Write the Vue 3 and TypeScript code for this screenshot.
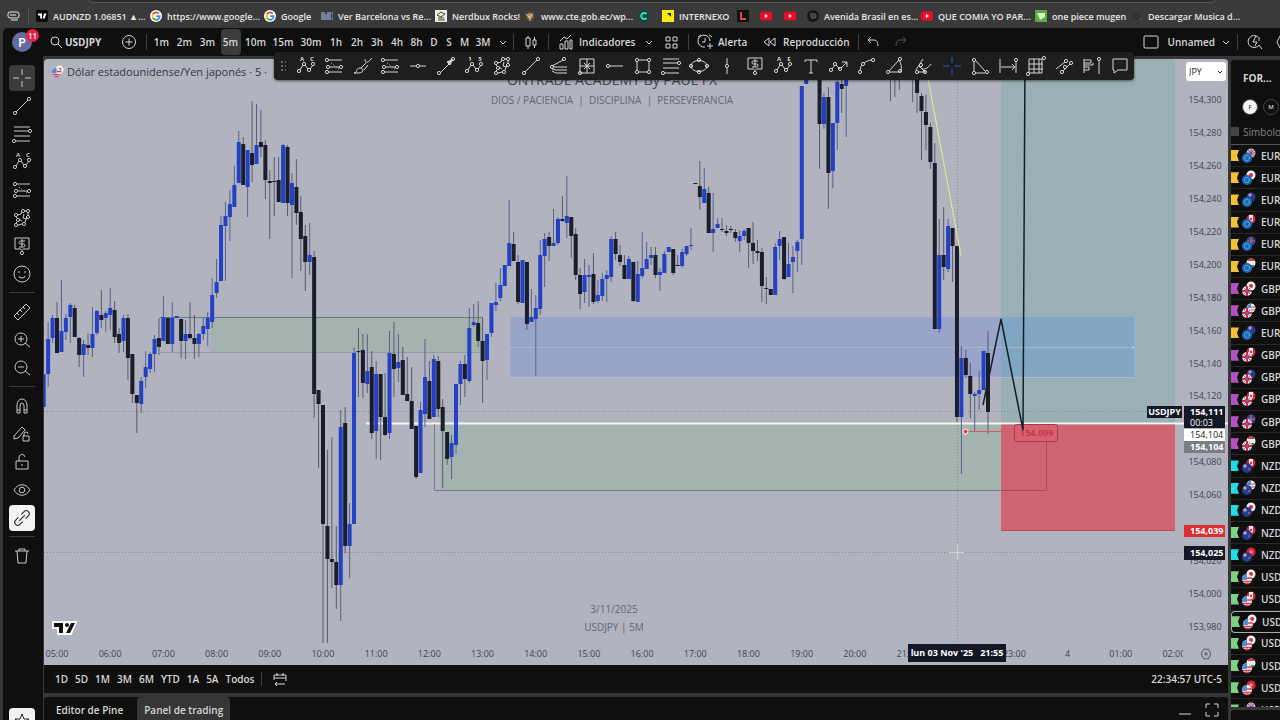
<script setup lang="ts">
interface Bookmark { icon: string; label: string }
interface Candle { x: number; high: number; top: number; bottom: number; low: number; kind: string }

const bookmarks: Bookmark[] = [
  { icon: 'tv', label: 'AUDNZD 1.06851 ▲...' },
  { icon: 'google', label: 'https://www.google...' },
  { icon: 'google', label: 'Google' },
  { icon: 'bars', label: 'Ver Barcelona vs Re...' },
  { icon: 'nerd', label: 'Nerdbux Rocks!' },
  { icon: 'crest', label: 'www.cte.gob.ec/wp...' },
  { icon: 'cee', label: '' },
  { icon: 'yellow', label: 'INTERNEXO' },
  { icon: 'ell', label: '' },
  { icon: 'tube', label: '' },
  { icon: 'tube', label: '' },
  { icon: 'disc', label: 'Avenida Brasil en es...' },
  { icon: 'tube', label: 'QUE COMIA YO PAR...' },
  { icon: 'green', label: 'one piece mugen' },
  { icon: 'dim', label: 'Descargar Musica d...' },
]

const favicons: Record<string, string> = {
  tv: '<rect width="12" height="12" rx="2" fill="#0a0a0a"/><path d="M2 3.500h4v5H4.200v-3H2zM8.200 3.500h2.300L8.600 8.500H6.600z" fill="#fff"/>',
  google: '<circle cx="6" cy="6" r="6" fill="#fff"/><g fill="none" stroke-width="1.800"><path d="M8.800 3.600A3.600 3.600 0 0 0 2.900 4.300" stroke="#ea4335"/><path d="M2.900 4.300a3.600 3.600 0 0 0 0 3.500" stroke="#fbbc05"/><path d="M2.900 7.800a3.600 3.600 0 0 0 5.600 1" stroke="#34a853"/><path d="M8.500 8.800A3.600 3.600 0 0 0 9.600 6.200H6.200" stroke="#4285f4"/></g>',
  bars: '<path d="M1 2v8M3 2v8M5 4v6M7 2v8M9 2v8" stroke="#a9c4ee" stroke-width="1"/><path d="M4 6h4M9 3h3v6H9" stroke="#5e8ed2" fill="none"/>',
  nerd: '<rect width="12" height="12" fill="#efefdf"/><path d="M2 5l4-3 4 2-4 3zM3 8h6M3 10h7" stroke="#40452f" fill="none"/>',
  crest: '<circle cx="6" cy="6" r="5.500" fill="#4b443d"/><circle cx="6" cy="6" r="3" fill="#b98b52"/><path d="M2 4l3 3 4-3M6 7v4" stroke="#ccc" fill="none"/>',
  cee: '<circle cx="6" cy="6" r="6" fill="#14463b"/><path d="M8.500 4A3 3 0 1 0 8.500 8" fill="none" stroke="#35ddb3" stroke-width="2"/>',
  yellow: '<rect width="12" height="12" fill="#f7ec13"/><path d="M5 3h4v4L7.500 5.500z" fill="#25250a"/>',
  ell: '<rect width="12" height="12" fill="#111"/><path d="M4 2v7h5" stroke="#d24a4f" stroke-width="2" fill="none"/>',
  tube: '<rect y="1.500" width="12" height="9" rx="2.500" fill="#f00b24"/><path d="M4.800 4v4L8.200 6z" fill="#fff"/>',
  disc: '<circle cx="6" cy="6" r="6" fill="#171717"/><path d="M3 4h4a2 2 0 0 1 0 4H4M3 6h4" stroke="#777" fill="none"/>',
  green: '<rect width="12" height="12" fill="#5da945"/><path d="M2 3h8v4L5 10z" fill="#ddf2cb"/>',
  dim: '<circle cx="5" cy="6" r="4" fill="#2d3335"/><circle cx="10" cy="9" r="1" fill="#555"/>',
}

const intervals = ['1m', '2m', '3m', '5m', '10m', '15m', '30m', '1h', '2h', '3h', '4h', '8h', 'D', 'S', 'M', '3M']

const dot = (x: number, y: number) => `<circle cx="${x}" cy="${y}" r="1.600"/>`
const tag = (x: number, y: number, s: string) => `<text x="${x}" y="${y}">${s}</text>`
const wave = '<path d="M-6 4L-3-1M-1-1L2 3M4 3L7-1"/>' + dot(-7, 5) + dot(-2, -2) + dot(3, 4) + dot(7, -2)

const glyphs: Record<string, string> = {
  cross: '<path d="M0-9v6M0 3v6M-9 0h6M3 0h6"/>',
  abcd: wave + tag(-4, -5, 'A') + tag(6, -5, 'C'),
  wave15: wave + tag(-4, -5, '1') + tag(6, -5, '5'),
  waveAE: wave + tag(-4, -5, 'A') + tag(6, -5, 'E'),
  channel: '<path d="M-5-6H8M-4 1H5M-5 6H8"/><path d="M-3-3L6 4" stroke-dasharray="1 2"/>' + dot(-7, -6) + dot(7, 1) + dot(-7, 6) + dot(-6, 1),
  brush: '<path d="M-8 7c4 0 1-5 6-5 4 0 4 5-1 5zM-1 2L4-3M2 4L6-1"/><path d="M3-7c0 5 3 4 7-1"/>',
  hline: '<path d="M-8 0h6M2 0h6"/>' + dot(0, 0),
  hray: '<path d="M-5 0H8"/>' + dot(-7, 0),
  arrow: '<path d="M-5 6L5-4"/><path d="M7-7L1-4 4-1z" fill="currentColor"/>' + dot(-7, 7) + dot(7, -7),
  pattern: '<path d="M-4-3L-1-4 0-6M3-7H4M6-5V-3M5-1L3 4M0 6L-4 7M-6 5L-5 4M-5 0L-6-1"/><path d="M2-4L1 0 4 1M-3 1L0 3"/>' + dot(-6, -3) + dot(1, -7) + dot(6, -7) + dot(6, -1) + dot(2, 6) + dot(-6, 7) + dot(-4, 2),
  trend: '<path d="M-6 6L6-6"/>' + dot(-7, 7) + dot(7, -7),
  fan: '<path d="M-7 0L4-6M-5 1H8M-7 3L-3 4H8M-7 5L-3 7H8"/>' + dot(5, -7) + dot(-7, 1),
  cube: '<path d="M-7-7H7V7H-7zM0-7V7M-7 0H7M-3-3L3 3M3-3L-3 3"/>' + dot(-7, 7),
  rect: '<path d="M-4-6H4M6-4V4M4 6H-4M-6 4V-4"/>' + dot(-6, -6) + dot(6, -6) + dot(6, 6) + dot(-6, 6),
  fib: '<path d="M-8-7H8M-8-3H6M-8 2H8M-6 7H8"/>' + dot(8, -3) + dot(-8, 7),
  ellipse: '<ellipse rx="8" ry="5.500"/>' + dot(0, -6) + dot(0, 6) + dot(-8, 0) + dot(8, 0),
  vline: '<path d="M0-8v6M0 2v6"/>' + dot(0, 0),
  dollar: '<path d="M-1 3H-7V-8H7V3H1M0 3v3"/><path d="M3-5H-1.500a1.500 1.500 0 0 0 0 3H1.500a1.500 1.500 0 0 1 0 3H-3M0-7V1"/>' + dot(0, 7),
  text: '<path d="M-6-4V-6H6V-4M0-6V7M-2 7H2"/>',
  zigzag: '<path d="M-7 3L-4-1M-3-1L1 3M2 2L8-4M3-4H8V1"/>' + dot(-8, 4) + dot(-4, -2) + dot(1, 3),
  curve: '<path d="M-7 4C-6 1-6 0-5-1M-3-3C0-5 2-6 5-6"/>' + dot(-7, 6) + dot(-4, -2) + dot(6, -6),
  sector: '<path d="M-6 5L4-6C7-1 7 4 5 6H-6"/>' + dot(-7, 6) + dot(5, -7) + dot(5, 5),
  pitch: '<path d="M-7 4L0-7M-4 0C0 6 5 2 8-2M-5 6H3M-4 0L2 6"/>' + dot(-6, 6) + dot(-2, -1) + dot(2, 6),
  triangle: '<path d="M-6-4V5M-4-5L5 5M-5 7H5"/>' + dot(-6, -6) + dot(-6, 7) + dot(7, 6),
  range: '<path d="M-8-7V7M8-4V7M-7 1H7M4-2L7 1 4 4"/>' + dot(8, -6),
  grid: '<path d="M-7-7H6V7H-7zM-7-2H7M-7 3H7M-2-7V7M3-7V7"/>' + dot(-8, 8) + dot(8, -8),
  parallel: '<path d="M-8 3L1-4M-1 5L6-2"/>' + dot(2, -5) + dot(-2, 6) + dot(7, -3) + dot(1, 1),
  profile: '<path d="M-8-7V7M-8-6H-1V-3H-8M-8-1H1V-3M-8 1H-3V4H-8M7-5V8"/>' + dot(7, -7),
  comment: '<path d="M-7-7H7V4H-2L-6 7V4H-7z"/>',
  smile: '<circle r="8"/><path d="M-3 2a3 2 0 0 0 6 0M-3-3v2M3-3v2"/>',
  ruler: '<path d="M-8 4L4-8 8-4-4 8zM-5 1l2 2M-2-2l2 2M1-5l2 2"/>',
  zoomin: '<circle cx="-1" cy="-1" r="6"/><path d="M3 3l5 4M-4-1h6M-1-4v6"/>',
  zoomout: '<circle cx="-1" cy="-1" r="6"/><path d="M3 3l5 4M-4-1h6"/>',
  magnet: '<path d="M-5 7V-1a5 6 0 0 1 10 0V7H2V0a2 3 0 0 0-4 0V7zM-5 4h3M2 4h3"/>',
  penlock: '<path d="M-8 2L0-7 3-4-4 4-8 5zM1 2H7V7H1zM2 2V0A2 2 0 0 1 6 0"/>',
  lock: '<path d="M-6-1H6V7H-6zM-3-1V-4A3 3 0 0 1 3-5M0 2v2"/>',
  eye: '<path d="M-8 0C-4-7 4-7 8 0 4 7-4 7-8 0z"/><circle r="2.800"/>',
  link: '<path transform="rotate(-45)" d="M-2-3H-6a3 3 0 0 0 0 6H-2M2-3H6a3 3 0 0 1 0 6H2M-4 0H4"/>',
  trash: '<path d="M-7-5H7M-5-5L-4 7H4L5-5M-3-5V-7H3V-5"/>',
  star: '<path d="M0-7L2-2H7L3 1 5 6 0 3-5 6-3 1-7-2H-2z"/>',
  search: '<circle cx="-1" cy="-1" r="4"/><path d="M2 2l4 4"/>',
  plus: '<circle r="6.500"/><path d="M-3.500 0h7M0-3.500v7"/>',
  chevron: '<path d="M-3-1L0 2 3-1"/>',
  candles: '<path d="M-5-4H-1V4H-5zM-3-6v2M-3 4v3M2-2H5V3H2zM3.500-5v3M3.500 3v3"/>',
  chart: '<path d="M-6 7V2H-3V7zM-1 7V-1H2V7zM4 7V-2H6V7zM-6-1L-2-5 1-3 5-7"/>',
  squares: '<path d="M-5-5H-1V-1H-5zM2-5H6V-1H2zM-5 2H-1V6H-5zM2 2H6V6H2z"/>',
  alarm: '<path d="M5-1A6 6 0 1 0 0 5M0-4V0H-3M-7-5L-4-7M4-7L7-5M5 1V7M2 4H8"/>',
  rewind: '<path d="M-1-4V4L-6 0zM5-4V4L0 0z"/>',
  undo: '<path d="M-2-5L-5-2-2 1M-5-2H1C4-2 5 1 5 4"/>',
  redo: '<path d="M2-5L5-2 2 1M5-2H-1C-4-2-5 1-5 4"/>',
  square: '<rect x="-7" y="-6" width="14" height="12" rx="1"/>',
  quick: '<path d="M3-5A6 6 0 1 0 4 3L7 7M1-6L-2 0H2L0 4M4-5v4"/>',
  hexagon: '<path d="M-3-6H3L6 0 3 6H-3L-6 0z"/><circle r="1.500"/>',
  calendar: '<path d="M-6 1V-4H6V2M-6-1H6M-3-6v3M3-6v3M5 5H-5M-3 3L-5 5-3 7"/>',
  minus: '<path d="M-6 4H6"/>',
  maximize: '<path d="M-6-2V-6H-2M2-6H6V-2M6 2V6H2M-2 6H-6V2"/>',
  frame: '<path d="M-5-2a2 2 0 0 1 2-2H4a2 2 0 0 1 2 2V0a2 2 0 0 1-2 2H-3a2 2 0 0 1-2-2zM-3-1H3M-2 4H5"/>',
}

const drawingTools = ['abcd', 'channel', 'brush', 'channel', 'hline', 'arrow', 'wave15', 'pattern', 'trend', 'fan', 'cube', 'hray', 'rect', 'fib', 'ellipse', 'vline', 'dollar', 'waveAE', 'text', 'zigzag', 'curve', 'sector', 'pitch', 'cross', 'triangle', 'range', 'grid', 'parallel', 'profile', 'comment']
const sideGroups = [
  ['cross', 'trend', 'fib', 'abcd', 'channel', 'pattern', 'dollar', 'smile'],
  ['ruler', 'zoomin', 'zoomout'],
  ['magnet', 'penlock', 'lock', 'eye', 'link'],
  ['trash'],
]

/* One entry per five-minute bar from 04:45: kind, wick high, body top, body bottom, wick low. */
const series = `
b 374 374 407 407;b 322 339 374 387;b 315 318 338 343;d 302 318 353 353;b 280 331 352 352;b 314 318 332 340;b 303 305 317 343;d 305 308 337 337;
d 337 338 355 367;b 340 344 355 377;d 333 345 348 355;b 307 334 348 357;b 310 311 333 335;d 290 315 320 328;b 311 313 318 332;b 288 308 315 330;
d 301 310 337 343;d 328 334 343 353;b 315 318 341 352;d 314 318 358 380;d 354 354 394 403;d 395 395 403 433;b 377 381 404 413;b 351 367 377 388;
b 352 354 369 373;b 335 339 354 372;d 318 338 347 355;b 296 317 341 341;d 318 318 344 344;b 302 318 344 352;b 316 316 318 318;d 319 319 341 358;
b 320 334 341 359;d 302 334 338 340;d 315 338 344 359;b 333 334 344 357;b 318 326 334 340;b 312 318 329 346;b 278 295 322 328;b 259 282 293 298;
b 216 225 281 281;b 202 216 226 281;b 190 204 217 241;b 166 185 207 207;b 131 142 183 183;d 137 144 185 185;b 150 150 187 217;d 101 153 165 182;
b 104 145 164 164;d 110 142 147 157;d 140 145 180 199;d 170 181 183 239;d 157 181 182 216;d 157 180 202 202;b 144 145 203 203;d 145 147 203 216;
b 173 183 205 278;d 159 187 213 225;d 196 212 239 271;d 225 236 262 291;b 223 255 262 275;d 251 257 394 418;d 390 390 404 468;d 405 405 524 643;
d 450 526 559 643;d 437 559 562 588;d 526 562 585 609;b 410 427 585 621;d 407 423 546 553;b 503 524 546 578;b 347 353 524 524;d 328 351 352 397;
d 334 350 383 398;b 334 371 384 393;d 351 367 433 439;b 361 374 431 459;d 374 374 417 460;d 373 417 435 436;b 331 353 433 439;d 322 354 369 397;
b 334 362 368 382;d 347 360 395 395;d 357 394 401 401;d 367 401 429 429;d 426 426 477 479;b 402 410 473 473;b 339 377 414 427;d 361 381 419 419;
b 355 359 417 417;d 356 361 409 417;d 399 407 431 488;d 432 432 459 465;b 435 443 457 479;b 384 384 445 454;b 361 364 384 405;d 355 364 379 397;
b 308 328 381 383;b 304 322 325 327;d 301 323 341 347;d 318 341 361 403;b 334 334 360 380;b 303 303 333 337;b 283 302 305 311;b 268 285 298 301;
b 265 265 286 286;b 200 243 266 266;d 232 244 261 261;d 255 262 302 304;b 260 260 303 303;d 262 262 324 330;b 289 317 322 322;b 295 308 319 376;
b 240 255 309 315;b 233 239 256 287;d 232 237 246 261;b 209 243 246 246;b 217 219 243 245;d 196 219 221 222;b 176 216 223 238;d 217 217 236 258;
d 228 234 275 280;d 268 275 294 309;b 259 275 292 303;b 265 275 277 307;d 253 274 302 304;b 280 295 301 303;b 273 279 296 301;b 270 275 279 302;
b 236 239 277 282;d 232 239 254 260;d 245 255 262 266;d 255 265 279 279;b 256 259 279 279;d 262 262 301 302;b 261 274 302 302;b 232 268 276 278;
b 242 259 269 269;b 247 255 258 265;d 247 255 275 278;b 268 272 275 291;b 251 254 273 273;b 247 247 252 252;d 249 249 273 275;d 255 265 266 266;
b 249 252 266 268;b 246 246 254 256;b 228 245 246 250;d 183 183 184 184;d 161 186 197 210;b 168 189 203 203;d 187 193 233 233;b 193 229 233 252;
b 218 224 228 228;d 218 229 230 232;d 225 231 233 236;d 226 229 230 233;d 229 232 238 242;b 230 236 241 252;b 229 231 236 240;d 228 228 243 268;
d 222 243 251 264;d 240 251 253 261;d 248 252 286 302;d 277 288 289 304;d 289 289 295 295;b 243 247 295 295;b 231 239 246 260;d 237 237 279 280;
b 243 264 277 277;b 246 257 262 293;b 240 242 251 272;b 86 86 239 265;b 70 70 84 84;b 60 60 70 70;b 60 60 70 70;d 60 60 124 169;b 93 97 124 129;
d 87 97 173 209;b 123 123 171 188;b 60 82 123 150;d 70 84 89 113;b 60 60 86 137;b 60 60 70 70;b 60 60 70 70;b 60 60 70 70;b 60 60 70 70;b 60 60 70 70;
b 60 60 70 70;b 60 60 70 70;b 60 60 70 70;b 60 60 70 70;d 60 60 70 101;d 60 60 70 97;d 60 60 70 90;d 60 60 70 70;d 60 60 70 70;d 60 60 70 102;
d 60 60 93 113;d 93 96 111 160;d 95 112 125 150;d 123 127 162 169;d 143 163 329 329;b 219 255 329 333;d 207 255 267 280;b 219 226 269 272;
d 228 228 246 282;d 246 246 417 422;b 346 358 417 474;d 350 358 375 378;d 363 376 394 418;b 392 394 396 431;b 371 390 394 410;b 351 351 390 390;d 331 353 412 434`

const candles: Candle[] = series.split(';').map((row, i) => {
  const [kind, high, top, bottom, low] = row.trim().split(' ')
  return { kind, x: 57 + ((i - 3) * 53.2) / 12, high: +high, top: +top, bottom: +bottom, low: +low }
})

/* Levels fully behind a price tag keep their slot on the scale and show no label. */
const covered = [154100, 154040]
const prices = Array.from({ length: 17 }, (_, i) => {
  const v = 154300 - i * 20
  return covered.includes(v) ? '' : `${Math.floor(v / 1000)},${String(v % 1000).padStart(3, '0')}`
})
const times = ['05:00', '06:00', '07:00', '08:00', '09:00', '10:00', '11:00', '12:00', '13:00', '14:00', '15:00', '16:00', '17:00', '18:00', '19:00', '20:00', '21:00', '', '23:00', '4', '01:00', '02:00']
const ranges = ['1D', '5D', '1M', '3M', '6M', 'YTD', '1A', '5A', 'Todos']

const quotes = ['gb', 'jp', 'au', 'ca', 'nz', 'hu', 'jp', 'us', 'au', 'ca', 'au', 'ca', 'nz', 'hu', 'ca', 'us', 'jp', 'ca', 'ch', 'jp', 'ca', 'jp', 'jp', 'hu', 'ch', 'gb']
const bases = ['EUR', 'EUR', 'EUR', 'EUR', 'EUR', 'EUR', 'GBP', 'GBP', 'EUR', 'GBP', 'GBP', 'GBP', 'GBP', 'GBP', 'NZD', 'NZD', 'NZD', 'NZD', 'NZD', 'USD', 'USD', 'USD', 'USD', 'USD', 'USD', 'USD']
const marks: Record<string, string> = { EUR: 'gold', GBP: 'violet', NZD: 'cyan', USD: 'lime' }
const watch = bases.map((base, i) => ({ base, quote: quotes[i], mark: i === 17 ? 'lime' : marks[base], active: i === 21 }))

const flags: Record<string, string> = {
  EUR: '<circle r="5" fill="#1769b8"/><circle r="2.500" fill="none" stroke="#b8d8f5" stroke-dasharray="1 1"/>',
  GBP: '<circle r="5" fill="#eadbe6"/><path d="M-5 0H5M0-5V5" stroke="#d32845" stroke-width="2"/><path d="M-3-3L3 3M3-3L-3 3" stroke="#6471a9"/>',
  NZD: '<circle r="5" fill="#203f8f"/><path d="M-4-2H0M-2-4V0" stroke="#f3b8c5"/><circle cx="2" cy="1" r="1" fill="#e94158"/>',
  USD: '<circle r="5" fill="#f4ecec"/><path d="M-4 2.500H4M0-1H5M-2 4.500H2" stroke="#d93f4e" stroke-width="1.500"/><path d="M-5 1A5 5 0 0 1 0-5V1z" fill="#4b8fd9"/>',
  gb: '<circle r="4.500" fill="#d9bccb"/><path d="M-4 0H4M0-4V4" stroke="#ce3c58"/><path d="M-3-3L3 3M3-3L-3 3" stroke="#51609d"/>',
  jp: '<circle r="4.500" fill="#f5f2f2"/><circle r="2" fill="#d8283b"/>',
  au: '<circle r="4.500" fill="#263b8b"/><path d="M-3-2H1M-1-4V0" stroke="#e8a8bb"/>',
  ca: '<circle r="4.500" fill="#d62a3d"/><path d="M-2-4V4L2 2V-4z" fill="#f4eded"/><circle r="1.200" fill="#d62a3d"/>',
  nz: '<circle r="4.500" fill="#34478c"/><path d="M-4 0H4M0-4V4" stroke="#d46a80"/>',
  us: '<circle r="4.500" fill="#eee"/><path d="M-4 2H4M0-1H4" stroke="#d8414f"/><path d="M-4 0A4 4 0 0 1 0-4V0z" fill="#4788cf"/>',
  hu: '<circle r="4.500" fill="#f0eee8"/><path d="M-3-3H3" stroke="#cf3c43" stroke-width="2"/><path d="M-3 3H3" stroke="#3c8b55" stroke-width="2"/>',
  ch: '<circle r="4.500" fill="#df2436"/><path d="M-2 0H2M0-2V2" stroke="#f2a7ad"/>',
}
</script>

<template>
  <div class="app">
    <nav class="bookmarks" aria-label="Marcadores">
      <span class="curve"></span>
      <button class="plain" aria-label="Pestañas"><svg class="g" viewBox="-11 -11 22 22" v-html="glyphs.frame"></svg></button>
      <a v-for="(b, i) in bookmarks" :key="i" href="#" :aria-label="b.label || b.icon">
        <svg class="fav" viewBox="0 0 12 12" v-html="favicons[b.icon]"></svg><span>{{ b.label }}</span>
      </a>
    </nav>

    <header class="topbar">
      <button class="avatar" aria-label="Perfil">P<span class="badge">11</span></button>
      <button class="symbol"><svg class="g" viewBox="-11 -11 22 22" v-html="glyphs.search"></svg>USDJPY</button>
      <button class="w34" aria-label="Comparar"><svg class="g" viewBox="-11 -11 22 22" v-html="glyphs.plus"></svg></button>
      <i class="sep"></i>
      <div class="intervals">
        <button v-for="t in intervals" :key="t" :class="{ on: t === '5m' }">{{ t }}</button>
      </div>
      <button class="w20" aria-label="Intervalos"><svg class="g" viewBox="-11 -11 22 22" v-html="glyphs.chevron"></svg></button>
      <i class="sep"></i>
      <button class="w34" aria-label="Velas"><svg class="g" viewBox="-11 -11 22 22" v-html="glyphs.candles"></svg></button>
      <i class="sep"></i>
      <button class="labelled ind"><svg class="g" viewBox="-11 -11 22 22" v-html="glyphs.chart"></svg>Indicadores</button>
      <button class="w22" aria-label="Favoritos"><svg class="g" viewBox="-11 -11 22 22" v-html="glyphs.chevron"></svg></button>
      <button class="w22" aria-label="Plantillas"><svg class="g" viewBox="-11 -11 22 22" v-html="glyphs.squares"></svg></button>
      <i class="sep"></i>
      <button class="labelled alert"><svg class="g" viewBox="-11 -11 22 22" v-html="glyphs.alarm"></svg>Alerta</button>
      <button class="labelled replay"><svg class="g" viewBox="-11 -11 22 22" v-html="glyphs.rewind"></svg>Reproducción</button>
      <i class="sep"></i>
      <button class="w28" aria-label="Deshacer"><svg class="g" viewBox="-11 -11 22 22" v-html="glyphs.undo"></svg></button>
      <button class="w28 faded" aria-label="Rehacer"><svg class="g" viewBox="-11 -11 22 22" v-html="glyphs.redo"></svg></button>
      <span class="grow"></span>
      <button class="labelled layout"><svg class="g" viewBox="-11 -11 22 22" v-html="glyphs.square"></svg>Unnamed</button>
      <button class="w22" aria-label="Diseños"><svg class="g" viewBox="-11 -11 22 22" v-html="glyphs.chevron"></svg></button>
      <i class="sep"></i>
      <button class="w34" aria-label="Búsqueda rápida"><svg class="g" viewBox="-11 -11 22 22" v-html="glyphs.quick"></svg></button>
      <button class="cut" aria-label="Ajustes"><svg class="g" viewBox="-11 -11 22 22" v-html="glyphs.hexagon"></svg></button>
    </header>

    <div class="drawbar" role="toolbar" aria-label="Herramientas favoritas">
      <span class="grip"></span>
      <button v-for="(t, i) in drawingTools" :key="i" :class="{ blue: t === 'cross' }" :aria-label="t"><svg class="g" viewBox="-11 -11 22 22" v-html="glyphs[t]"></svg></button>
    </div>

    <div class="body">
      <aside class="side">
        <div v-for="(grp, gi) in sideGroups" :key="gi" class="group">
          <button v-for="t in grp" :key="t" :class="{ sel: t === 'cross', lit: t === 'link' }" :aria-label="t"><svg class="g" viewBox="-11 -11 22 22" v-html="glyphs[t]"></svg></button>
        </div>
        <button class="lit starbtn" aria-label="Favoritos"><svg class="g" viewBox="-11 -11 22 22" v-html="glyphs.star"></svg></button>
      </aside>

      <main class="center">
        <section class="chart">
          <svg class="plot" viewBox="44 59 1184 606" preserveAspectRatio="xMinYMin slice">
            <g class="mark">
              <text x="612" y="85" class="m1">ONTRADE ACADEMY By PAUL FX</text>
              <text x="612" y="104" class="m2">DIOS / PACIENCIA&nbsp; |&nbsp; DISCIPLINA&nbsp; |&nbsp; PERSEVERANCIA</text>
              <text x="614" y="613" class="m2">3/11/2025</text>
              <text x="614" y="631" class="m2">USDJPY | 5M</text>
            </g>
            <rect x="211" y="318" width="272" height="34" fill="#a4b3ad" />
            <path d="M160 317.500H483" stroke="#6b7786" /><path d="M160 352.500H483" stroke="#929ca6" />
            <rect x="440" y="424" width="561" height="66" fill="#a5b4af" />
            <rect x="510" y="317" width="492" height="60" fill="#9aa4c8" />
            <rect x="1001" y="59" width="174" height="365" fill="#9bb0b4" />
            <rect x="1001" y="317" width="133" height="60" fill="#80a6c1" />
            <path d="M510 347.500H1134" stroke="#a9b6d5" /><path d="M509.500 317V377.500H1134" fill="none" stroke="#b1bad4" />
            <path d="M1134.500 317V377" stroke="#86b7e4" />
            <rect x="1001" y="424" width="174" height="107" fill="#cf6570" />
            <path d="M1001 424.500H1175M1001 530.500H1175" stroke="#b94b59" />
            <path d="M1131 344l3 3-3 3" fill="none" stroke="#a4c4e4" />
            <g stroke="#858893" stroke-dasharray="1 2">
              <path d="M44 411.500H1184M44 552.500H1184" /><path d="M957.500 80V665" />
            </g>
            <path d="M366 423.500H1228" stroke="#f6f6f8" stroke-width="2" />
            <path d="M434.500 424V490.500H1001" fill="none" stroke="#747a8e" />
            <path d="M1001 490.500H1046.500V440" fill="none" stroke="#a04a60" />
            <g v-for="(c, i) in candles" :key="i" :class="c.kind">
              <path :d="`M${c.x} ${c.high}V${c.low}`" class="wick" />
              <rect :x="c.x - 2" :y="c.top" width="4" :height="Math.max(1, c.bottom - c.top)" />
            </g>
            <path d="M928 78L961 256" stroke="#eee98f" fill="none" />
            <path d="M965 431.500H1014" stroke="#d35b68" />
            <circle cx="965.500" cy="431.500" r="2.500" fill="#e13b47" stroke="#fff" />
            <rect x="1014.500" y="424.500" width="43" height="17" rx="2" fill="#d9606d" stroke="#a73a50" />
            <text x="1020" y="436" class="call">154,099</text>
            <path d="M983 405L1001 319 1023 430 1025 59" fill="none" stroke="#10202a" stroke-width="1.500" />
            <path d="M949 552.500H964M957.500 545V560" stroke="#d0d1cd" />
            <g transform="translate(53 621)"><path d="M0 1H11V13H5V7H0zM13 1H23L18 13H10z" fill="#fff" stroke="#fff" stroke-width="2" /><path d="M1 2H10V12H6V6H1zM18 2H22L17 12H13z" fill="#111" /><circle cx="14" cy="4" r="2" fill="#111" /></g>
          </svg>
          <div class="legend"><svg viewBox="-8 -8 16 16"><g transform="translate(2 -2)" v-html="flags.jp"></g><g transform="translate(-1 1)" v-html="flags.USD"></g></svg>Dólar estadounidense/Yen japonés · 5 ·</div>
          <span class="symtag">USDJPY</span>
          <div class="prices">
            <div class="unit">
              <select aria-label="Divisa"><option>JPY</option></select>
              <svg viewBox="-5 -5 10 10"><path d="M-2-1L0 1 2-1" /></svg>
            </div>
            <span v-for="(p, i) in prices" :key="i">{{ p }}</span>
            <b class="last">154,111<br /><i>00:03</i></b>
            <b class="bid">154,104</b>
            <b class="ask">154,104</b>
            <b class="stop">154,039</b>
            <b class="cursor">154,025</b>
          </div>
          <div class="times"><div><span v-for="(t, i) in times" :key="i">{{ t }}</span></div></div>
          <span class="timetag">lun 03 Nov '25 &nbsp; 21:55</span>
          <button class="gear" aria-label="Ajustes del gráfico"><svg class="g" viewBox="-11 -11 22 22" v-html="glyphs.hexagon"></svg></button>
        </section>
        <section class="ranges">
          <button v-for="r in ranges" :key="r">{{ r }}</button>
          <i class="sep"></i>
          <button aria-label="Ir a"><svg class="g" viewBox="-11 -11 22 22" v-html="glyphs.calendar"></svg></button>
          <span class="grow"></span><button>22:34:57 UTC-5</button>
        </section>
        <section class="tabs">
          <button>Editor de Pine</button><button class="on">Panel de trading</button>
          <span class="grow"></span>
          <button class="win" aria-label="Minimizar"><svg class="g" viewBox="-11 -11 22 22" v-html="glyphs.minus"></svg></button>
          <button class="win" aria-label="Maximizar"><svg class="g" viewBox="-11 -11 22 22" v-html="glyphs.maximize"></svg></button>
        </section>
      </main>

      <aside class="watch">
        <div class="scroll">
          <button class="list">FOR...</button>
          <div class="chips"><span class="f">F</span><span>M</span></div>
          <div class="head"><i></i>Símbolo</div>
          <div v-for="(w, i) in watch" :key="i" class="row" :class="{ active: w.active }">
            <i :class="w.mark"></i>
            <svg viewBox="-9 -9 18 18"><g transform="translate(3 -3)" v-html="flags[w.quote]"></g><g transform="translate(-1 2)" v-html="flags[w.base]"></g></svg>
            <span>{{ w.base }}</span>
          </div>
        </div>
        <div class="detail"></div>
      </aside>
    </div>
  </div>
</template>

<style>
html, body { background: #363636; overflow: hidden; }
</style>
<style scoped>
.app { position: relative; display: flex; flex-direction: column; height: 100vh; overflow: hidden; background: #363636; color: #d6d6d6; font: 600 11px "Open Sans", "Noto Sans", sans-serif; }
.app * { box-sizing: border-box; }
button { display: flex; align-items: center; justify-content: center; flex: none; border: 0; padding: 0; margin: 0; background: none; color: inherit; font: inherit; }
.g { display: block; flex: none; width: 22px; height: 22px; overflow: visible; fill: none; stroke: currentColor; stroke-width: 1; }
.g :deep(text) { fill: currentColor; stroke: none; font: 700 6px "Open Sans", sans-serif; text-anchor: middle; }
.grow { flex: 1; }

.bookmarks { position: relative; display: grid; grid-template-columns: 36px 114px 114px 57px 114px 89px 114px 24px 75px 23px 24px 23px 114px 114px 96px 1fr; align-items: center; height: 28px; flex: none; padding-top: 4px; background: #3a3a3a; font: 600 9px "Open Sans", "Noto Sans", sans-serif; color: #e6e6e6; }
.bookmarks a { display: flex; align-items: center; gap: 5px; min-width: 0; color: inherit; text-decoration: none; white-space: nowrap; }
.fav { width: 12px; height: 12px; flex: none; }
.plain { justify-content: flex-start; padding-left: 2px; height: 14px; width: 29px; border-right: 1px solid #555; }
.curve { position: absolute; top: -6px; left: 88px; right: 64px; height: 9px; border: 1px solid #5b5b5b; border-radius: 8px; background: #2b2b2b; }

.topbar { display: flex; align-items: center; height: 28px; flex: none; margin-left: 3px; background: #0f0f0f; border-radius: 5px 0 0 0; font-size: 10px; }
.avatar { position: relative; width: 20px; height: 20px; margin: 0 13px 0 9px; border-radius: 50%; background: #666a9d; color: #fff; font-size: 13px; }
.badge { position: absolute; top: -3px; right: -7px; width: 13px; height: 13px; border-radius: 50%; background: #e81f45; font-size: 8px; line-height: 13px; text-align: center; }
.symbol { width: 67px; justify-content: flex-start; font-weight: 700; }
.symbol .g { margin-right: -2px; }
.w20 { width: 20px; } .w22 { width: 22px; } .w28 { width: 28px; } .w34 { width: 34px; }
.topbar .sep { width: 1px; height: 16px; background: #404040; flex: none; }
.intervals { display: grid; grid-template-columns: 23px 23px 23px 23px 27px 28px 28px 22px 20px 20px 20px 19px 16px 14px 17px 20px; margin-left: 3px; }
.intervals button { height: 26px; }
.intervals .on { background: #3b3b3b; border-radius: 4px; width: 20px; justify-self: center; }
.labelled { justify-content: flex-start; gap: 2px; white-space: nowrap; font-size: 10px; }
.ind { width: 83px; padding-left: 6px; margin-right: 6px; }
.ind + .w22 + .w22 { margin-right: 6px; }
.alert { width: 64px; padding-left: 5px; margin-right: 6px; }
.replay { width: 99px; }
.faded { opacity: 0.35; }
.layout { gap: 6px; }
.cut { width: 8px; justify-content: flex-start; overflow: hidden; }

.drawbar { position: absolute; z-index: 4; top: 52px; left: 274px; display: grid; grid-template-columns: 18px repeat(30, 1fr); align-items: center; width: 860px; height: 28px; border-radius: 4px; background: #1e1e1e; box-shadow: 0 1px 3px #0008; }
.grip { width: 6px; height: 12px; margin-left: 6px; background: radial-gradient(circle, #666 1px, transparent 1px) 0 0 / 4px 4px; }
.blue { color: #3558bd; }

.body { flex: 1; min-height: 0; display: grid; grid-template-columns: 40px 1fr 52px; margin-left: 3px; }
.side { position: relative; overflow: hidden; padding: 8px 2px 0 0; background: #0f0f0f; color: #c9c9c9; }
.group { display: flex; flex-direction: column; align-items: center; }
.group + .group::before { content: ""; width: 26px; height: 1px; margin: 4px 0 5px; background: #3c3c3c; }
.group button { width: 26px; height: 26px; margin: 1px 0; border-radius: 4px; }
.sel { background: #3c3c3c; }
.group .lit, .lit { background: #f2f2f2; color: #222; }
.starbtn { position: absolute; bottom: -14px; left: 6px; width: 26px; height: 26px; border-radius: 4px; }

.center { display: flex; flex-direction: column; min-width: 0; margin-left: 1px; padding-top: 3px; }
.chart { position: relative; flex: 1; min-height: 0; overflow: hidden; border-radius: 4px 4px 0 0; background: #b1b4be; color: #3f434f; }
.plot { position: absolute; inset: 0; width: 100%; height: 100%; }
.mark text { text-anchor: middle; fill: #626673; font-family: "Open Sans", sans-serif; font-weight: 400; }
.mark .m1 { font-size: 14px; fill: #42454f; } .mark .m2 { font-size: 10px; }
.b rect { fill: #2440c4; } .d rect { fill: #1b1e2a; }
.wick { stroke-width: 1; stroke: #575c6c; } .b .wick { stroke: #55608f; }
.call { font: 600 9px "Open Sans", sans-serif; fill: #c22f46; }
.legend { position: absolute; top: 5px; left: 6px; display: flex; align-items: center; gap: 2px; font: 400 11px "Open Sans", sans-serif; color: #33363f; white-space: nowrap; }
.legend svg { width: 15px; height: 15px; }
.prices { position: absolute; top: 0; right: 0; bottom: 22px; width: 44px; display: flex; flex-direction: column; justify-content: space-between; align-items: center; padding: 35px 2px 10px 0; font: 400 9px "Open Sans", sans-serif; }
.prices span { height: 12px; line-height: 12px; }
.unit { position: absolute; top: 3px; left: 2px; width: 40px; height: 19px; }
.unit select { appearance: none; width: 100%; height: 100%; border: 0; border-radius: 3px; padding: 0 3px; background: #fff; color: #222; font: 400 9px "Open Sans", sans-serif; }
.unit svg { position: absolute; right: 1px; top: 5px; width: 10px; height: 10px; fill: none; stroke: #222; pointer-events: none; }
.prices b { position: absolute; left: 0; width: 41px; height: 12px; line-height: 12px; padding-left: 6px; font-weight: 700; color: #fff; }
.prices i { font-style: normal; font-weight: 400; }
.prices .last { top: 347px; height: 22px; line-height: 11px; background: #141724; }
.prices .bid { top: 370px; background: #fff; color: #222; font-weight: 400; }
.prices .ask { top: 382px; background: #7b7d84; }
.prices .stop { top: 466px; background: #dd2d35; }
.prices .cursor { top: 487px; height: 14px; line-height: 14px; background: #141724; }
.symtag { position: absolute; top: 347px; right: 46px; width: 35px; height: 12px; background: #141724; color: #fff; font: 700 9px/12px "Open Sans", sans-serif; text-align: center; }
.times { position: absolute; left: 0; right: 45px; bottom: 0; height: 22px; overflow: hidden; font: 400 9px/22px "Open Sans", sans-serif; }
.times div { display: flex; justify-content: space-between; margin: 0 -8px 0 -4px; }
.times span { width: 34px; text-align: center; }
.timetag { position: absolute; left: 864px; bottom: 3px; width: 98px; height: 18px; background: #141724; color: #fff; font: 700 9px/18px "Open Sans", sans-serif; text-align: center; white-space: nowrap; }
.gear { position: absolute; right: 11px; bottom: 0; }
.gear .g { transform: scale(0.8); }

.ranges { display: flex; align-items: center; flex: none; height: 28px; gap: 7px; padding: 0 6px 0 11px; background: #0f0f0f; font-size: 10px; }
.ranges .sep { width: 1px; height: 14px; background: #3c3c3c; }
.tabs { display: flex; align-items: flex-start; flex: none; height: 23px; margin-top: 4px; padding: 0 3px 0 12px; background: #0f0f0f; border-radius: 3px 3px 0 0; font-size: 10px; overflow: hidden; }
.tabs button { height: 26px; white-space: nowrap; }
.tabs .on { margin-left: 14px; padding: 0 7px; border-radius: 4px 4px 0 0; background: #363636; }
.tabs .win { width: 27px; }

.watch { display: flex; flex-direction: column; min-width: 0; margin: 4px 0 0 3px; overflow: hidden; }
.scroll { flex: 1; min-height: 0; overflow: hidden; background: #0f0f0f; border-radius: 3px 0 0 0; }
.list { height: 35px; padding-left: 12px; font-size: 10px; font-weight: 700; white-space: nowrap; }
.chips { display: flex; gap: 5px; padding-left: 11px; height: 24px; align-items: center; }
.chips span { width: 16px; height: 16px; flex: none; border: 1px solid #444; border-radius: 50%; font-size: 6px; line-height: 14px; text-align: center; }
.chips .f { background: #f5f5f5; color: #333; }
.head { display: flex; align-items: center; gap: 4px; height: 26px; font-size: 10px; font-weight: 400; color: #858585; border-bottom: 1px solid #555; white-space: nowrap; }
.head i { width: 8px; height: 9px; flex: none; background: #444; }
.row { display: flex; align-items: center; height: calc(100% / 29.18); border-bottom: 1px solid #282828; font-size: 10px; }
.row i { width: 8px; height: 11px; flex: none; clip-path: polygon(0 0, 100% 0, 75% 50%, 100% 100%, 0 100%); }
.row svg { width: 18px; height: 18px; flex: none; margin-right: 4px; }
.row.active { border: 1px solid #aaa; border-right: 0; border-radius: 4px 0 0 4px; }
.gold { background: #f3c137; } .violet { background: #b451c2; } .cyan { background: #22dce5; } .lime { background: #7ed084; }
.detail { height: 10px; flex: none; margin-top: 3px; background: #0f0f0f; border-radius: 3px 0 0 0; }
</style>
